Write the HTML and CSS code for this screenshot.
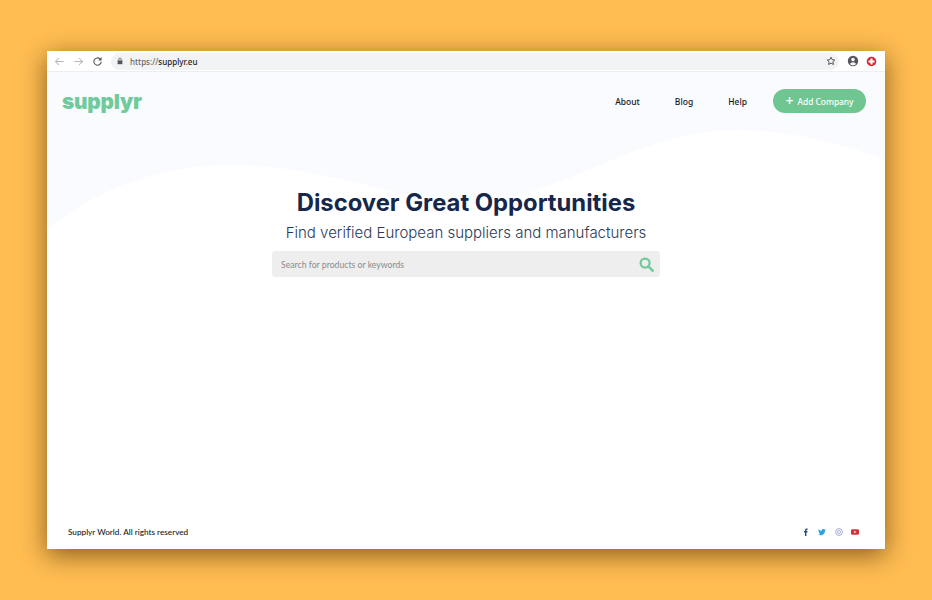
FILE: index.html
```html
<!DOCTYPE html>
<html lang="en">
<head>
    <meta charset="UTF-8">
    <meta name="viewport" content="width=device-width, initial-scale=1.0">
    <title>Supplyr</title>
    <link rel="stylesheet" href="styles.css">
</head>
<body>
    <div class="window">
        <div class="toolbar">
            <svg class="tool-icon" viewBox="0 0 12 12"><path d="M10.500 6H2M5.500 2.200 1.700 6l3.800 3.800" fill="none" stroke="#b4b6ba" stroke-width="1.100"/></svg>
            <svg class="tool-icon" viewBox="0 0 12 12"><path d="M1.500 6H10M6.500 2.200 10.300 6l-3.800 3.800" fill="none" stroke="#b4b6ba" stroke-width="1.100"/></svg>
            <svg class="tool-icon" viewBox="0 0 12 12"><path d="M10 6.200A4 4 0 1 1 8.800 3.200" fill="none" stroke="#54565a" stroke-width="1.200"/><path d="M10.400 1.200v3.600H6.800z" fill="#54565a"/></svg>
            <div class="address">
                <svg class="lock" viewBox="0 0 10 10"><path d="M2 4.200h6V9H2z" fill="#54565a"/><path d="M3.400 4.200V3a1.600 1.600 0 0 1 3.200 0v1.200" fill="none" stroke="#54565a" stroke-width="1"/></svg>
                <span class="url"><span class="scheme">https://</span>supplyr.eu</span>
                <svg class="star" viewBox="0 0 12 12"><path d="m6 1.400 1.400 3 3.200.4-2.400 2.200.7 3.200L6 8.600l-2.900 1.600.7-3.200-2.400-2.200 3.200-.4z" fill="none" stroke="#4a4c50" stroke-width="1.100"/></svg>
            </div>
            <svg class="profile" viewBox="0 0 12 12"><circle cx="6" cy="6" r="5.200" fill="#54565a"/><circle cx="6" cy="4.600" r="1.800" fill="#f2f3f5"/><path d="M2.800 9a3.800 3.800 0 0 1 6.400 0 4.400 4.400 0 0 1-6.400 0z" fill="#f2f3f5"/></svg>
            <svg class="extension" viewBox="0 0 12 12"><circle cx="6" cy="6" r="5.200" fill="#d8202a"/><path d="M4.800 2.600h2.400v2.200h2.200v2.400H7.200v2.200H4.800V7.200H2.600V4.800h2.200z" fill="#fff"/></svg>
        </div>
        <div class="page">
            <svg class="wave" viewBox="0 0 838 170" preserveAspectRatio="none"><path d="M0 0H838V88C790 70 740 58 690 58 610 58 550 100 483 120 455 128 430 130 403 128 330 122 270 93 183 93 110 93 45 120 0 158Z" fill="#fafbff"/></svg>
            <header class="header">
                <a class="logo" href="#">supplyr</a>
                <nav class="nav">
                    <a href="#">About</a>
                    <a href="#">Blog</a>
                    <a href="#">Help</a>
                </nav>
                <a class="add-btn" href="#"><span class="plus">+</span>Add Company</a>
            </header>
            <main class="hero">
                <h1>Discover Great Opportunities</h1>
                <p>Find verified European suppliers and manufacturers</p>
                <div class="search">
                    <span class="placeholder">Search for products or keywords</span>
                    <svg class="search-icon" viewBox="0 0 16 16"><circle cx="6.500" cy="6.500" r="4.800" fill="none" stroke="#6fcb9c" stroke-width="2.400"/><path d="m10 10 4.600 4.600" stroke="#6fcb9c" stroke-width="2.800" stroke-linecap="round"/></svg>
                </div>
            </main>
            <footer class="footer">
                <span>Supplyr World. All rights reserved</span>
                <div class="social">
                    <svg viewBox="0 0 8 8"><path d="M3 8V4.400H2V3.100h1V2.200C3 1 3.600.4 4.700.4h.9v1.300H5c-.4 0-.6.2-.6.6v.8h1.200L5.400 4.400h-1V8z" fill="#2b4a86"/></svg>
                    <svg viewBox="0 0 8 8"><path d="M7.800 1.700c-.3.1-.6.2-.9.2.3-.2.6-.5.7-.9-.3.2-.6.3-1 .4a1.600 1.600 0 0 0-2.700 1.400A4.500 4.500 0 0 1 .6 1.200a1.600 1.600 0 0 0 .5 2.100c-.3 0-.5-.1-.7-.2 0 .8.5 1.400 1.300 1.600-.2.1-.5.1-.7 0 .2.6.8 1.100 1.500 1.100A3.200 3.200 0 0 1 .1 6.500 4.500 4.500 0 0 0 7.100 2.500c.3-.2.5-.5.7-.8z" fill="#2f9fe0"/></svg>
                    <svg viewBox="0 0 8 8"><circle cx="4" cy="4" r="3.400" fill="none" stroke="#a6a9dc" stroke-width="1"/><circle cx="4" cy="4" r="1.500" fill="none" stroke="#a6a9dc" stroke-width=".9"/></svg>
                    <svg viewBox="0 0 8 8"><rect y="1.200" width="8" height="5.600" rx="1.300" fill="#d8323c"/><path d="M3.200 2.800v2.400L5.200 4z" fill="#fff"/></svg>
                </div>
            </footer>
        </div>
    </div>
</body>
</html>
```

FILE: styles.css
```css
* { box-sizing: border-box; }
body {
    margin: 0;
    height: 600px;
    padding: 51px 47px;
    background-color: #ffbd52;
    overflow: hidden;
    font-family: "Lato", sans-serif;
}
a { text-decoration: none; color: inherit; }

.window {
    height: 498px;
    display: flex;
    flex-direction: column;
    background-color: #fff;
    box-shadow: 0 6px 24px rgba(70, 40, 0, 0.65);
}

.toolbar {
    height: 21px;
    flex: none;
    display: flex;
    align-items: center;
    padding: 0 7px;
    gap: 8px;
    background-color: #fff;
    border-bottom: 1px solid #eceef1;
}
.tool-icon { width: 11px; height: 11px; flex: none; }
.address {
    flex: 1;
    height: 17px;
    padding: 0 3px 0 5px;
    display: flex;
    align-items: center;
    gap: 6px;
    background-color: #f2f3f5;
    border-radius: 9px;
}
.lock { width: 8px; height: 8px; flex: none; }
.url { flex: 1; font-family: "Noto Sans", sans-serif; font-size: 8px; font-weight: 500; color: #222; }
.scheme { color: #666; }
.star { width: 10px; height: 10px; flex: none; }
.profile { width: 12px; height: 12px; flex: none; }
.extension { width: 11px; height: 11px; flex: none; margin-left: -1px; margin-right: 1px; }

.page {
    position: relative;
    flex: 1;
    display: flex;
    flex-direction: column;
    min-height: 0;
}
.wave { position: absolute; top: 0; left: 0; width: 838px; height: 170px; }

.header {
    position: relative;
    display: flex;
    align-items: center;
    padding: 16px 19px 0 15px;
    height: 42px;
}
.logo {
    font-family: "Inter", sans-serif;
    font-weight: 900;
    font-size: 20.800px;
    letter-spacing: -0.2px;
    color: #6fcb9c;
    margin-right: auto;
}
.nav {
    display: flex;
    gap: 35px;
    margin-right: 26px;
    font-family: "Noto Sans", sans-serif;
    font-size: 8.500px;
    font-weight: 500;
    color: #15171c;
}
.add-btn {
    width: 93px;
    height: 24px;
    display: flex;
    align-items: center;
    justify-content: center;
    gap: 4px;
    background-color: #6fc690;
    border-radius: 12px;
    color: #fff;
    font-family: "Noto Sans", sans-serif;
    font-size: 8.400px;
    font-weight: 500;
}
.plus { font-size: 14px; font-weight: 500; line-height: 14px; }

.hero {
    position: relative;
    width: 388px;
    margin: 73px auto 0;
    text-align: center;
}
.hero h1 {
    margin: 0;
    font-family: "Inter", sans-serif;
    font-size: 23.800px;
    line-height: 32px;
    font-weight: 700;
    color: #16274a;
    white-space: nowrap;
}
.hero p {
    margin: 3px -20px 0;
    font-family: "Inter", sans-serif;
    font-size: 15px;
    line-height: 22px;
    font-weight: 300;
    color: #2b3a58;
    white-space: nowrap;
}
.search {
    height: 26px;
    margin-top: 7px;
    padding: 0 6px 0 9px;
    display: flex;
    align-items: center;
    justify-content: space-between;
    background-color: #eeeeee;
    border-radius: 3px;
}
.placeholder { font-size: 8.700px; color: #8c8c8c; }
.search-icon { width: 15px; height: 15px; }

.footer {
    position: relative;
    margin-top: auto;
    height: 22px;
    padding: 0 26px 0 21px;
    display: flex;
    align-items: flex-start;
    justify-content: space-between;
    font-size: 8.200px;
    font-weight: 500;
    color: #15171c;
}
.social { display: flex; gap: 8.300px; margin-top: 1px; }
.social svg { width: 8px; height: 8px; }
```
